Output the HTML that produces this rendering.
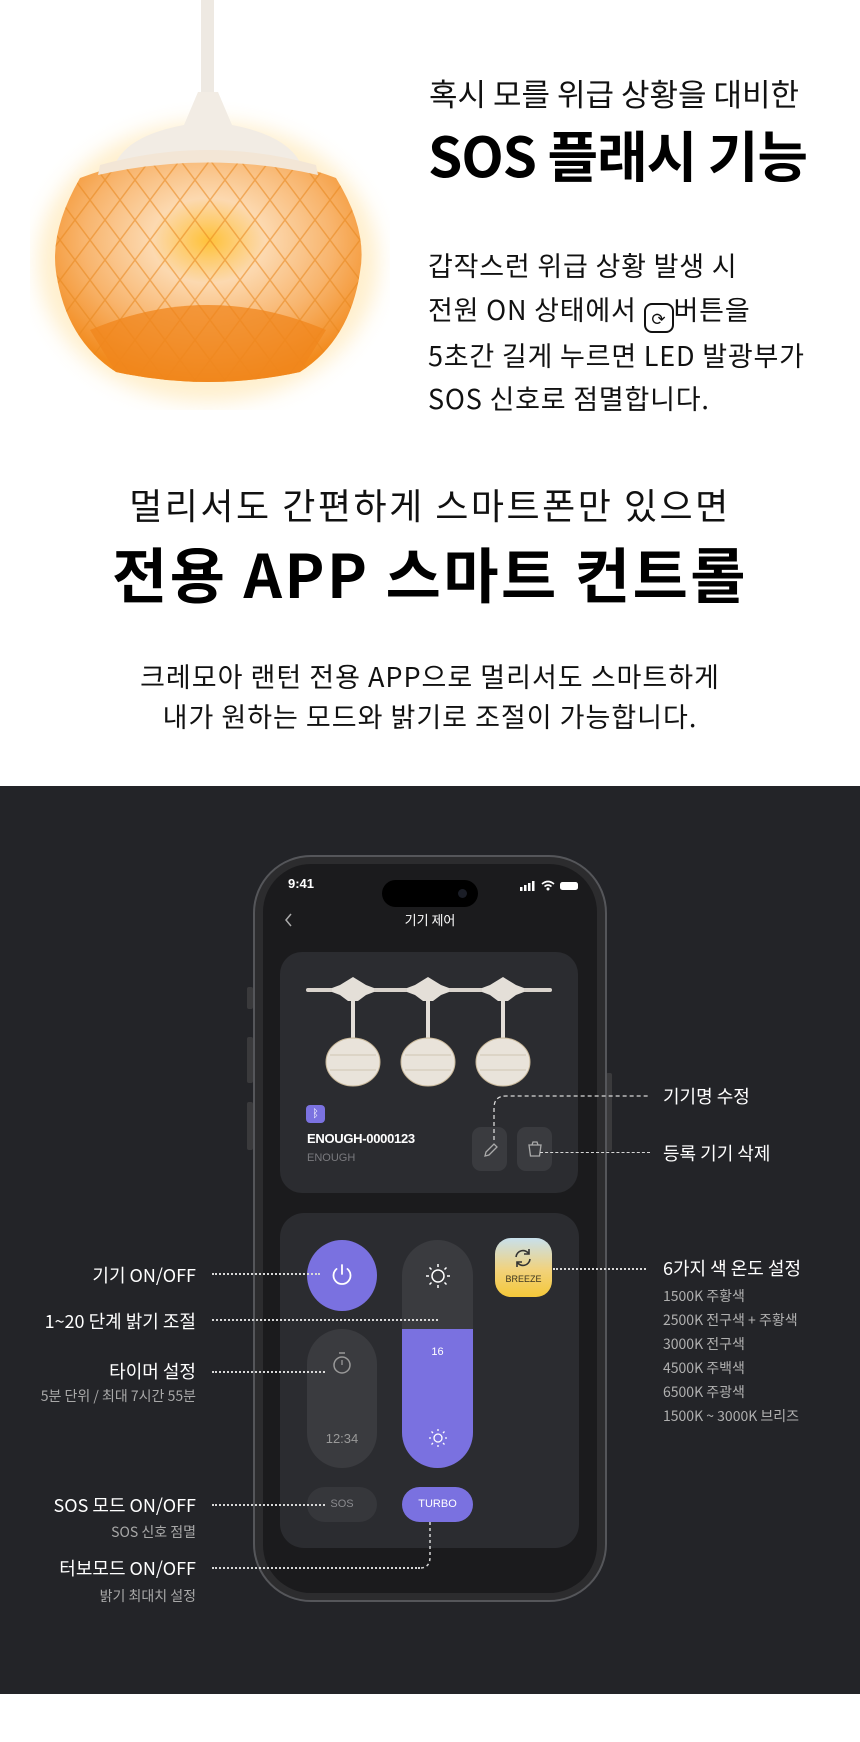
<!DOCTYPE html>
<html><head><meta charset="utf-8"><style>
*{margin:0;padding:0;box-sizing:border-box}
body{width:860px;height:1742px;position:relative;background:#fff;font-family:"Liberation Sans","Noto Sans CJK KR",sans-serif;overflow:hidden}
.a{position:absolute;white-space:nowrap}
.k{font-family:"Noto Sans CJK KR","Liberation Sans",sans-serif}
.dk{position:absolute;left:0;top:786px;width:860px;height:908px;background:#232428}
.dot{position:absolute;border-top:2px dotted #d8d8d8;height:0}
.lab{position:absolute;color:#fff;font-size:18px;letter-spacing:0;white-space:nowrap;font-family:"Noto Sans CJK KR",sans-serif}
.sub{position:absolute;color:#a8a8a8;font-size:14px;letter-spacing:0;white-space:nowrap;font-family:"Noto Sans CJK KR",sans-serif}
</style></head><body>

<svg class="a" style="left:30px;top:0" width="360" height="410" viewBox="30 0 360 410">
<defs>
<radialGradient id="g" cx="0.5" cy="0.38" r="0.62">
<stop offset="0" stop-color="#ffc23a"/><stop offset="0.3" stop-color="#fcd9b0"/><stop offset="0.65" stop-color="#f8b56e"/><stop offset="1" stop-color="#f28a1c"/></radialGradient>
<filter id="bl"><feGaussianBlur stdDeviation="10"/></filter>
<pattern id="p" width="30" height="40" patternUnits="userSpaceOnUse"><path d="M0 0L30 40M30 0L0 40" stroke="#e8861c" stroke-width="1.5" opacity=".55"/></pattern>
</defs>
<ellipse cx="208" cy="262" rx="170" ry="140" fill="#ffdc90" opacity=".45" filter="url(#bl)"/>
<rect x="201" y="0" width="13" height="100" fill="#eee9e2"/>
<path d="M198 92L218 92L232 125Q285 135 300 162L116 162Q130 135 184 125Z" fill="#f2ece4"/>
<path d="M80 178Q208 130 336 178Q368 230 360 272Q350 340 300 372Q208 392 116 372Q66 340 56 272Q50 230 80 178Z" fill="url(#g)"/>
<path d="M80 178Q208 130 336 178Q368 230 360 272Q350 340 300 372Q208 392 116 372Q66 340 56 272Q50 230 80 178Z" fill="url(#p)"/>
<path d="M90 330Q208 280 326 330L300 372Q208 392 116 372Z" fill="#f0861c" opacity=".75"/>
<path d="M100 165Q208 135 316 165L318 175Q208 150 98 175Z" fill="#f3e6d6"/>
</svg>

<div class="a k" style="left:429px;top:70px;font-size:31px;letter-spacing:0;color:#111">혹시 모를 위급 상황을 대비한</div>
<div class="a k" style="left:428px;top:120px;font-size:55px;font-weight:700;letter-spacing:-1px;color:#000;line-height:66px">SOS 플래시 기능</div>
<div class="a k" style="left:428px;top:243px;font-size:27px;letter-spacing:0.8px;color:#111;line-height:43.5px">갑작스런 위급 상황 발생 시<br>전원 ON 상태에서 <span style="display:inline-block;width:30px;height:30px;border:2px solid #111;border-radius:8px;vertical-align:-5px;text-align:center;font-size:17px;line-height:26px;letter-spacing:0">⟳</span>버튼을<br>5초간 길게 누르면 LED 발광부가<br>SOS 신호로 점멸합니다.</div>

<div class="a k" style="left:0;width:860px;text-align:center;top:478px;font-size:36px;letter-spacing:2.5px;color:#111">멀리서도 간편하게 스마트폰만 있으면</div>
<div class="a k" style="left:0;width:860px;text-align:center;top:533px;font-size:60px;font-weight:700;letter-spacing:2.5px;color:#000;line-height:80px">전용 APP 스마트 컨트롤</div>
<div class="a k" style="left:0;width:860px;text-align:center;top:656px;font-size:27px;letter-spacing:1px;color:#111;line-height:40px">크레모아 랜턴 전용 APP으로 멀리서도 스마트하게<br>내가 원하는 모드와 밝기로 조절이 가능합니다.</div>

<div class="dk"></div>

<!-- phone -->
<div class="a" style="left:247px;top:987px;width:6px;height:22px;background:#3a3a3c;border-radius:2px"></div>
<div class="a" style="left:247px;top:1037px;width:6px;height:46px;background:#3a3a3c;border-radius:2px"></div>
<div class="a" style="left:247px;top:1102px;width:6px;height:48px;background:#3a3a3c;border-radius:2px"></div>
<div class="a" style="left:606px;top:1073px;width:6px;height:78px;background:#3a3a3c;border-radius:2px"></div>
<div class="a" style="left:253px;top:855px;width:354px;height:747px;border-radius:58px;background:#2c2c2e;border:2px solid #55565a"></div>
<div class="a" style="left:263px;top:864px;width:334px;height:729px;border-radius:48px;background:#1b1b1d"></div>
<div class="a" style="left:382px;top:880px;width:96px;height:27px;border-radius:14px;background:#000"></div>
<div class="a" style="left:458px;top:889px;width:9px;height:9px;border-radius:50%;background:#1a1d26"></div>
<div class="a" style="left:288px;top:876px;color:#fff;font-size:13px;font-weight:700">9:41</div>
<svg class="a" style="left:520px;top:880px" width="62" height="12"><rect x="0" y="7" width="2.5" height="4" fill="#fff"/><rect x="4" y="5" width="2.5" height="6" fill="#fff"/><rect x="8" y="3" width="2.5" height="8" fill="#fff"/><rect x="12" y="1" width="2.5" height="10" fill="#fff"/><path d="M22 4Q28 -1 34 4M24.5 6.5Q28 3.5 31.5 6.5" stroke="#fff" stroke-width="1.6" fill="none"/><circle cx="28" cy="9" r="1.5" fill="#fff"/><rect x="40" y="2" width="18" height="8" rx="2.5" fill="#fff"/></svg>
<svg class="a" style="left:284px;top:912px" width="10" height="16"><path d="M7 2L2 8L7 14" stroke="#aaa" stroke-width="1.5" fill="none"/></svg>
<div class="a k" style="left:380px;top:910px;width:100px;text-align:center;color:#fff;font-size:13px">기기 제어</div>

<div class="a" style="left:280px;top:952px;width:298px;height:241px;border-radius:22px;background:#2b2c30"></div>
<svg class="a" style="left:300px;top:975px" width="260" height="115">
<rect x="6" y="13" width="246" height="4" rx="2" fill="#d9d3cc"/>
<g fill="#e4dfd8">
<path d="M40 10L53 2L66 10L74 13L74 17L66 20L58 26L48 26L40 20L32 17L32 13Z"/>
<path d="M115 10L128 2L141 10L149 13L149 17L141 20L133 26L123 26L115 20L107 17L107 13Z"/>
<path d="M190 10L203 2L216 10L224 13L224 17L216 20L208 26L198 26L190 20L182 17L182 13Z"/>
<rect x="51" y="26" width="4" height="42"/><rect x="126" y="26" width="4" height="42"/><rect x="201" y="26" width="4" height="42"/>
</g>
<g fill="#e9e3da" stroke="#c9b89a" stroke-width="1">
<ellipse cx="53" cy="87" rx="27" ry="24"/><ellipse cx="128" cy="87" rx="27" ry="24"/><ellipse cx="203" cy="87" rx="27" ry="24"/></g>
<g stroke="#b7a88e" stroke-width=".8" opacity=".7" fill="none"><path d="M30 80L76 80M30 95L76 95M105 80L151 80M105 95L151 95M180 80L226 80M180 95L226 95"/></g>
</svg>
<div class="a" style="left:306px;top:1105px;width:19px;height:18px;border-radius:4px;background:#7b72e0;color:#fff;font-size:11px;text-align:center;line-height:18px">ᛒ</div>
<div class="a" style="left:307px;top:1131px;color:#fff;font-size:13px;font-weight:700;letter-spacing:-.3px">ENOUGH-0000123</div>
<div class="a" style="left:307px;top:1152px;color:#7a7a7e;font-size:11px">ENOUGH</div>
<div class="a" style="left:472px;top:1127px;width:35px;height:44px;border-radius:9px;background:#3a3b3f"></div>
<div class="a" style="left:517px;top:1127px;width:35px;height:44px;border-radius:9px;background:#3a3b3f"></div>
<svg class="a" style="left:480px;top:1140px" width="20" height="20"><path d="M5 16L6 12L14 4L17 7L9 15Z" stroke="#aaa" stroke-width="1.3" fill="none"/></svg>
<svg class="a" style="left:525px;top:1139px" width="20" height="20"><path d="M4 6L16 6L14.5 17L5.5 17Z M7 6L8 3L12 3L13 6" stroke="#aaa" stroke-width="1.3" fill="none"/></svg>

<div class="a" style="left:280px;top:1213px;width:299px;height:335px;border-radius:24px;background:#2b2c30"></div>
<div class="a" style="left:307px;top:1240px;width:70px;height:71px;border-radius:50%;background:#7a71e0"></div>
<svg class="a" style="left:330px;top:1262px" width="24" height="26"><path d="M6.5 7A8.5 8.5 0 1 0 17.5 7" stroke="#fff" stroke-width="1.8" fill="none" stroke-linecap="round"/><path d="M12 3L12 12" stroke="#fff" stroke-width="1.8" stroke-linecap="round"/></svg>
<div class="a" style="left:402px;top:1240px;width:71px;height:228px;border-radius:36px;background:#3a3b3f;overflow:hidden"><div style="position:absolute;left:0;top:89px;width:71px;height:139px;background:#7a71e0"></div></div>
<svg class="a" style="left:424px;top:1262px" width="28" height="28"><circle cx="14" cy="14" r="6" stroke="#fff" stroke-width="1.5" fill="none"/><g stroke="#fff" stroke-width="1.5"><path d="M14 2V5M14 23V26M2 14H5M23 14H26M5.5 5.5L7.5 7.5M20.5 20.5L22.5 22.5M5.5 22.5L7.5 20.5M20.5 7.5L22.5 5.5"/></g></svg>
<div class="a" style="left:402px;top:1346px;width:71px;text-align:center;color:#fff;font-size:11px">16</div>
<svg class="a" style="left:428px;top:1428px" width="20" height="20"><circle cx="10" cy="10" r="4" stroke="#fff" stroke-width="1.3" fill="none"/><g stroke="#fff" stroke-width="1.3"><path d="M10 1V3M10 17V19M1 10H3M17 10H19M3.5 3.5L5 5M15 15L16.5 16.5M3.5 16.5L5 15M15 5L16.5 3.5"/></g></svg>
<div class="a" style="left:307px;top:1329px;width:70px;height:139px;border-radius:35px;background:#3a3b3f"></div>
<svg class="a" style="left:331px;top:1351px" width="22" height="26"><path d="M8 2H14" stroke="#999" stroke-width="1.5"/><circle cx="11" cy="14" r="8" stroke="#999" stroke-width="1.5" fill="none"/><path d="M11 9V14" stroke="#999" stroke-width="1.3"/></svg>
<div class="a" style="left:307px;top:1431px;width:70px;text-align:center;color:#999;font-size:13px">12:34</div>
<div class="a" style="left:495px;top:1238px;width:57px;height:59px;border-radius:16px;background:linear-gradient(#c8e0ec,#f2d27a 55%,#f4c83a)"></div>
<svg class="a" style="left:511px;top:1246px" width="24" height="24"><path d="M5 11A7 7 0 0 1 18 8M19 13A7 7 0 0 1 6 16" stroke="#333" stroke-width="1.6" fill="none"/><path d="M18 3V8H13M6 21V16H11" stroke="#333" stroke-width="1.6" fill="none"/></svg>
<div class="a" style="left:495px;top:1274px;width:57px;text-align:center;color:#3a3320;font-size:9px">BREEZE</div>
<div class="a" style="left:307px;top:1487px;width:70px;height:35px;border-radius:18px;background:#36373b;color:#8a8a8e;font-size:11px;text-align:center;line-height:35px">SOS</div>
<div class="a" style="left:402px;top:1487px;width:71px;height:35px;border-radius:18px;background:#7a71e0;color:#fff;font-size:11px;text-align:center;line-height:35px">TURBO</div>

<!-- callout lines -->
<div class="dot" style="left:212px;top:1273px;width:108px"></div>
<div class="dot" style="left:212px;top:1319px;width:226px"></div>
<div class="dot" style="left:212px;top:1371px;width:113px"></div>
<div class="dot" style="left:212px;top:1504px;width:113px"></div>
<div class="dot" style="left:212px;top:1567px;width:208px"></div>
<svg class="a" style="left:415px;top:1522px" width="20" height="48"><path d="M15 0V35Q15 46 5 46" stroke="#d8d8d8" stroke-width="1.5" stroke-dasharray="3 3" fill="none"/></svg>
<div class="dot" style="left:553px;top:1268px;width:93px"></div>
<svg class="a" style="left:490px;top:1092px" width="160" height="50"><path d="M4 48V16Q4 4 16 4H158" stroke="#d8d8d8" stroke-width="1.3" stroke-dasharray="4 3" fill="none"/></svg>
<div class="dot" style="left:540px;top:1152px;width:110px;border-top-style:dashed;border-top-width:1.3px"></div>

<div class="lab" style="right:664px;top:1262px">기기 ON/OFF</div>
<div class="lab" style="right:664px;top:1308px">1~20 단계 밝기 조절</div>
<div class="lab" style="right:664px;top:1358px">타이머 설정</div>
<div class="sub" style="right:664px;top:1386px">5분 단위 / 최대 7시간 55분</div>
<div class="lab" style="right:664px;top:1492px">SOS 모드 ON/OFF</div>
<div class="sub" style="right:664px;top:1522px">SOS 신호 점멸</div>
<div class="lab" style="right:664px;top:1555px">터보모드 ON/OFF</div>
<div class="sub" style="right:664px;top:1586px">밝기 최대치 설정</div>

<div class="lab" style="left:663px;top:1083px">기기명 수정</div>
<div class="lab" style="left:663px;top:1140px">등록 기기 삭제</div>
<div class="lab" style="left:663px;top:1255px">6가지 색 온도 설정</div>
<div class="sub" style="left:663px;top:1284px;font-size:14px;line-height:24px;color:#b0b0b0">1500K 주황색<br>2500K 전구색 + 주황색<br>3000K 전구색<br>4500K 주백색<br>6500K 주광색<br>1500K ~ 3000K 브리즈</div>
</body></html>
